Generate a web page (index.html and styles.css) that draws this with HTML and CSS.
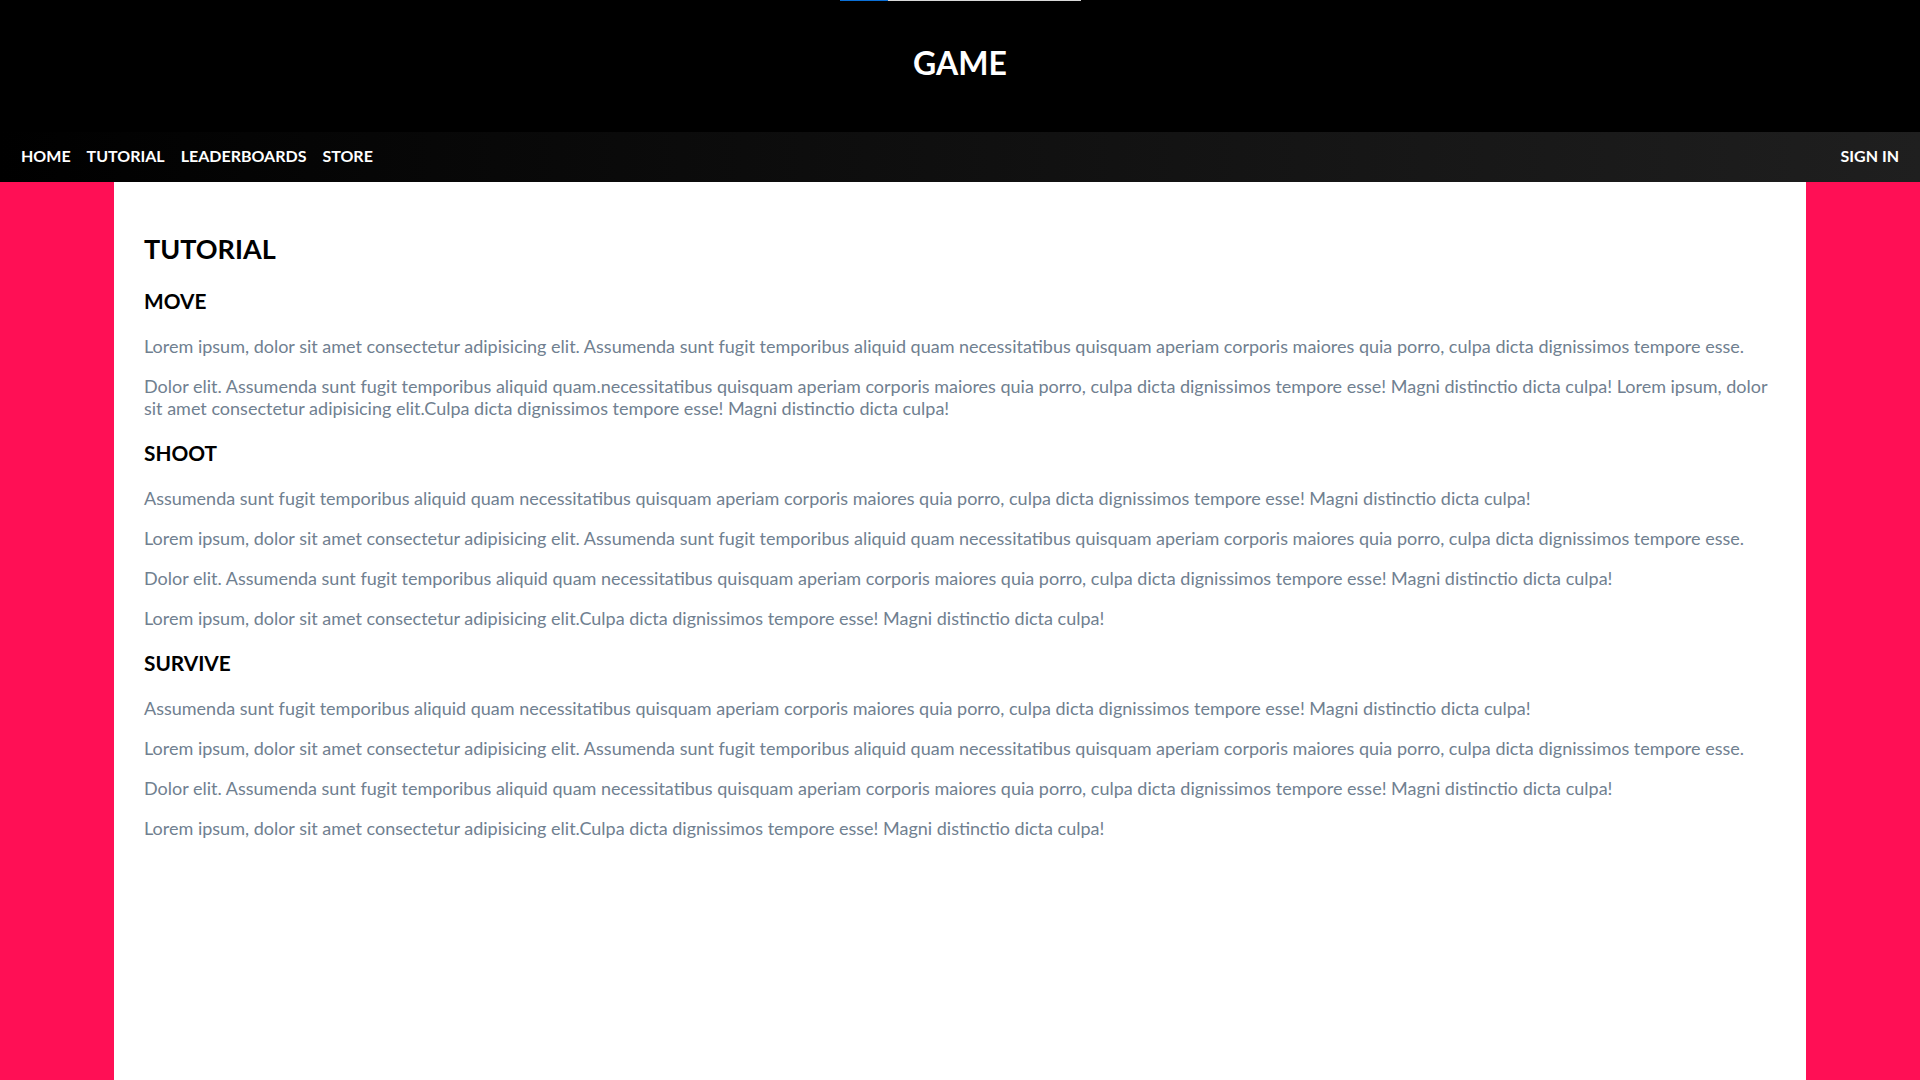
FILE: index.html
```html
<!DOCTYPE html>
<html lang="en">
<head>
<meta charset="utf-8">
<title>GAME - Tutorial</title>
<link rel="stylesheet" href="styles.css">
</head>
<body>
<header class="site-header">
  <div class="progress"><div class="progress-fill"></div></div>
  <h1 class="site-title">GAME</h1>
</header>
<nav class="main-nav">
  <ul class="nav-links">
    <li><a href="#">HOME</a></li>
    <li><a href="#">TUTORIAL</a></li>
    <li><a href="#">LEADERBOARDS</a></li>
    <li><a href="#">STORE</a></li>
  </ul>
  <a class="sign-in" href="#">SIGN IN</a>
</nav>
<main class="page">
  <article class="content">
    <h1 class="page-title">TUTORIAL</h1>
    <h2 class="section-title">MOVE</h2>
    <p>Lorem ipsum, dolor sit amet consectetur adipisicing elit. Assumenda sunt fugit temporibus aliquid quam necessitatibus quisquam aperiam corporis maiores quia porro, culpa dicta dignissimos tempore esse.</p>
    <p>Dolor elit. Assumenda sunt fugit temporibus aliquid quam.necessitatibus quisquam aperiam corporis maiores quia porro, culpa dicta dignissimos tempore esse! Magni distinctio dicta culpa! Lorem ipsum, dolor sit amet consectetur adipisicing elit.Culpa dicta dignissimos tempore esse! Magni distinctio dicta culpa!</p>
    <h2 class="section-title">SHOOT</h2>
    <p>Assumenda sunt fugit temporibus aliquid quam necessitatibus quisquam aperiam corporis maiores quia porro, culpa dicta dignissimos tempore esse! Magni distinctio dicta culpa!</p>
    <p>Lorem ipsum, dolor sit amet consectetur adipisicing elit. Assumenda sunt fugit temporibus aliquid quam necessitatibus quisquam aperiam corporis maiores quia porro, culpa dicta dignissimos tempore esse.</p>
    <p>Dolor elit. Assumenda sunt fugit temporibus aliquid quam necessitatibus quisquam aperiam corporis maiores quia porro, culpa dicta dignissimos tempore esse! Magni distinctio dicta culpa!</p>
    <p>Lorem ipsum, dolor sit amet consectetur adipisicing elit.Culpa dicta dignissimos tempore esse! Magni distinctio dicta culpa!</p>
    <h2 class="section-title">SURVIVE</h2>
    <p>Assumenda sunt fugit temporibus aliquid quam necessitatibus quisquam aperiam corporis maiores quia porro, culpa dicta dignissimos tempore esse! Magni distinctio dicta culpa!</p>
    <p>Lorem ipsum, dolor sit amet consectetur adipisicing elit. Assumenda sunt fugit temporibus aliquid quam necessitatibus quisquam aperiam corporis maiores quia porro, culpa dicta dignissimos tempore esse.</p>
    <p>Dolor elit. Assumenda sunt fugit temporibus aliquid quam necessitatibus quisquam aperiam corporis maiores quia porro, culpa dicta dignissimos tempore esse! Magni distinctio dicta culpa!</p>
    <p>Lorem ipsum, dolor sit amet consectetur adipisicing elit.Culpa dicta dignissimos tempore esse! Magni distinctio dicta culpa!</p>
  </article>
</main>
</body>
</html>
```
FILE: styles.css
```css
* {
  box-sizing: border-box;
}

html, body {
  margin: 0;
  padding: 0;
}

body {
  font-family: Lato, "Noto Sans", "Liberation Sans", sans-serif;
  background: #ff0f55;
  min-height: 100vh;
  display: flex;
  flex-direction: column;
}

.site-header {
  background: #000;
  height: 132px;
  display: flex;
  flex-direction: column;
  align-items: center;
}

.progress {
  width: 241px;
  height: 1px;
  background: #d9d9d9;
  display: flex;
}

.progress-fill {
  width: 48px;
  height: 100%;
  background: #0a6fd6;
}

.site-title {
  margin: 43px 0 0;
  color: #fff;
  font-size: 32px;
  font-weight: 700;
  line-height: 1.2;
}

.main-nav {
  height: 50px;
  background: linear-gradient(to right, #000, #1f1f1f);
  display: flex;
  align-items: center;
  justify-content: space-between;
  padding: 0 21px 2px;
}

.nav-links {
  list-style: none;
  margin: 0;
  padding: 0;
  display: flex;
  gap: 16px;
}

.main-nav a {
  color: #fff;
  text-decoration: none;
  font-size: 16px;
  font-weight: 700;
  line-height: 1.2;
}

.page {
  flex: 1;
  margin: 0 114px;
  background: #fff;
}

.content {
  padding: 30px;
}

.page-title {
  font-size: 27px;
  font-weight: 700;
  color: #000;
  line-height: 1.2;
  margin: 21px 0 24px;
}

.section-title {
  font-size: 20.8px;
  font-weight: 700;
  color: #000;
  line-height: 1.2;
  margin: 22px 0 21px;
}

.content p {
  font-size: 18px;
  line-height: 22px;
  color: slategray;
  margin: 18px 0;
}
```
